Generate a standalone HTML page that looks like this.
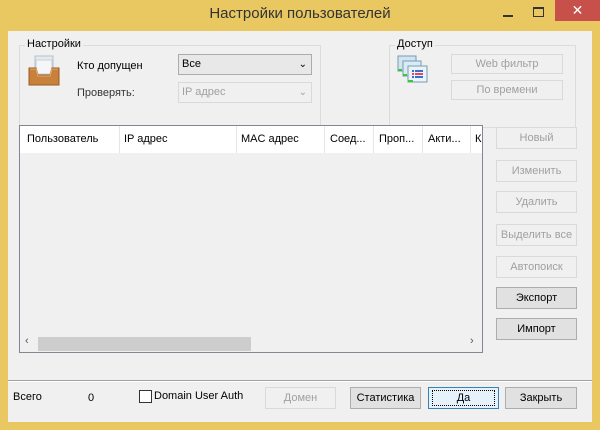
<!DOCTYPE html>
<html><head><meta charset="utf-8"><style>
*{box-sizing:border-box;margin:0;padding:0}
body{width:600px;height:430px;background:#e9c862;font-family:"Liberation Sans",sans-serif;font-size:11px;color:#000;position:relative;overflow:hidden}
.a{position:absolute}
#client{left:8px;top:31px;width:584px;height:391px;background:#f0f0f0}
.title{left:0;top:5px;width:600px;text-align:center;font-size:15px;color:#333}
.grp{border:1px solid #dcdcdc}
.lbl{background:#f0f0f0;padding:0 2px}
.btn{border:1px solid #adadad;background:#e1e1e1;text-align:center;line-height:20px;height:22px}
.dis{border-color:#d9d9d9;background:#f0f0f0;color:#a0a0a0}
.combo{border:1px solid #acacac;background:#e8e8e8;height:21px;line-height:19px;padding-left:3px}
.hdr{top:0;height:27px;line-height:27px;border-right:1px solid #e5e5e5}
</style></head><body>
<div class="a title">Настройки пользователей</div>
<div class="a" style="left:503px;top:15px;width:10px;height:2px;background:#333"></div>
<div class="a" style="left:533px;top:7px;width:11px;height:10px;border:1px solid #333;border-top-width:2px"></div>
<div class="a" style="left:555px;top:0;width:45px;height:21px;background:#c7504a;color:#fff;text-align:center;font-size:14px;line-height:20px">✕</div>
<div class="a" id="client"></div>

<div class="a grp" style="left:19px;top:45px;width:302px;height:83px"></div>
<div class="a lbl" style="left:25px;top:38px">Настройки</div>
<svg class="a" style="left:28px;top:55px" width="32" height="32" viewBox="0 0 32 32">
<rect x="7" y="1" width="18" height="16" fill="#e4e9ef" stroke="#b8c0c8"/>
<rect x="8" y="5" width="16" height="14" fill="#f4f6f8" stroke="#c8ced4"/>
<path d="M1 13 L8 13 L10 20 L22 20 L24 13 L31 13 L31 30 L1 30 Z" fill="#c8813c" stroke="#9a5a22"/>
<path d="M2 14 L8 14 L10 21 L22 21 L24 14 L30 14" fill="none" stroke="#e6a868"/>
</svg>
<div class="a" style="left:77px;top:60px">Кто допущен</div>
<div class="a combo" style="left:178px;top:54px;width:134px">Все<span style="position:absolute;right:4px;top:0;font-size:10px">&#8964;</span></div>
<div class="a" style="left:77px;top:87px;color:#333">Проверять:</div>
<div class="a combo" style="left:178px;top:82px;width:134px;border-color:#d9d9d9;background:#f0f0f0;color:#a0a0a0">IP адрес<span style="position:absolute;right:4px;top:0;font-size:10px">&#8964;</span></div>

<div class="a grp" style="left:389px;top:45px;width:187px;height:83px"></div>
<div class="a lbl" style="left:395px;top:38px">Доступ</div>
<svg class="a" style="left:397px;top:55px" width="32" height="30" viewBox="0 0 32 30">
<rect x="1" y="1" width="18" height="15" fill="#cfe6f2" stroke="#7a9ab0"/>
<rect x="6" y="6" width="18" height="15" fill="#d8ecf6" stroke="#7a9ab0"/>
<rect x="11" y="11" width="19" height="16" fill="#e8f4fa" stroke="#7a9ab0"/>
<rect x="1" y="14" width="4" height="2" fill="#3c3"/><rect x="6" y="19" width="4" height="2" fill="#3c3"/><rect x="11" y="25" width="5" height="2" fill="#3c3"/>
<rect x="15" y="15" width="2" height="2" fill="#3a6fd0"/><rect x="18" y="15" width="8" height="2" fill="#3a6fd0"/>
<rect x="15" y="18" width="2" height="2" fill="#e45"/><rect x="18" y="18" width="8" height="2" fill="#e45"/>
<rect x="15" y="21" width="2" height="2" fill="#3a6fd0"/><rect x="18" y="21" width="8" height="2" fill="#3a6fd0"/>
</svg>
<div class="a btn dis" style="left:451px;top:54px;width:112px;height:20px;line-height:18px">Web фильтр</div>
<div class="a btn dis" style="left:451px;top:80px;width:112px;height:20px;line-height:18px">По времени</div>

<div class="a" style="left:19px;top:125px;width:464px;height:228px;border:1px solid #828790;background:#f0f0f0;overflow:hidden">
<div class="a" style="left:0;top:0;width:462px;height:27px;background:#fff"></div>
<div class="a hdr" style="left:0;width:100px;padding-left:7px">Пользователь</div>
<div class="a hdr" style="left:100px;width:117px;padding-left:4px">IP адрес</div>
<div class="a hdr" style="left:217px;width:88px;padding-left:4px">MAC адрес</div>
<div class="a hdr" style="left:305px;width:49px;padding-left:5px">Соед...</div>
<div class="a hdr" style="left:354px;width:49px;padding-left:5px">Проп...</div>
<div class="a hdr" style="left:403px;width:48px;padding-left:5px">Акти...</div>
<div class="a hdr" style="left:451px;width:20px;padding-left:4px;border:0">К</div>
<div class="a" style="left:0;top:209px;width:462px;height:17px;background:#f0f0f0"></div>
<div class="a" style="left:18px;top:211px;width:213px;height:14px;background:#cdcdcd"></div>
<div class="a" style="left:5px;top:209px;font-size:11px;color:#555">&lsaquo;</div>
<div class="a" style="left:450px;top:209px;font-size:11px;color:#555">&rsaquo;</div>
</div>

<div class="a btn dis" style="left:496px;top:127px;width:81px">Новый</div>
<div class="a btn dis" style="left:496px;top:160px;width:81px">Изменить</div>
<div class="a btn dis" style="left:496px;top:191px;width:81px">Удалить</div>
<div class="a btn dis" style="left:496px;top:224px;width:81px">Выделить все</div>
<div class="a btn dis" style="left:496px;top:256px;width:81px">Автопоиск</div>
<div class="a btn" style="left:496px;top:287px;width:81px">Экспорт</div>
<div class="a btn" style="left:496px;top:318px;width:81px">Импорт</div>

<div class="a" style="left:8px;top:380px;width:584px;height:1px;background:#a0a0a0"></div>
<div class="a" style="left:8px;top:381px;width:584px;height:1px;background:#fff"></div>
<div class="a" style="left:13px;top:391px">Всего</div>
<div class="a" style="left:88px;top:392px">0</div>
<div class="a" style="left:139px;top:390px;width:13px;height:13px;border:1px solid #333;background:#fff"></div>
<div class="a" style="left:154px;top:390px">Domain User Auth</div>
<div class="a btn dis" style="left:265px;top:387px;width:71px">Домен</div>
<div class="a btn" style="left:350px;top:387px;width:71px">Статистика</div>
<div class="a btn" style="left:428px;top:387px;width:71px;border-color:#3c7fb1;background:#e5f1fb"><span style="border:1px dotted #000;padding:1px 24px">Да</span></div>
<div class="a btn" style="left:505px;top:387px;width:72px">Закрыть</div>
</body></html>
